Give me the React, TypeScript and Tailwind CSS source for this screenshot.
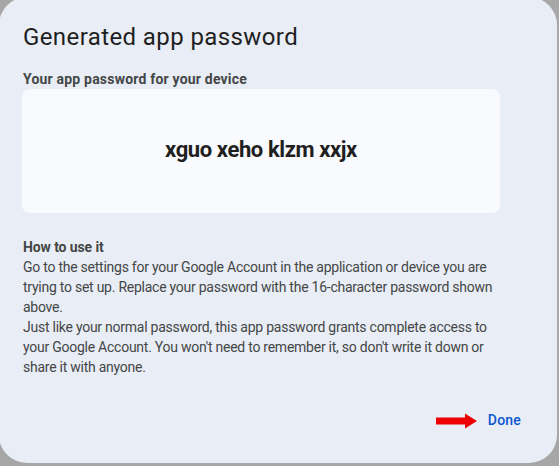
export default function App() {
  return (
    <div className="h-[466px] w-[559px] overflow-hidden bg-[#a7a7a7] font-['Roboto','Liberation_Sans',sans-serif]">
      <section className="ml-[-1px] mt-[-3px] flex h-[466px] w-[558px] flex-col rounded-[28px] bg-[#e9edf6] px-6 pt-6">
        <h1 className="text-[24px] leading-[32px] tracking-[0.4px] text-[#1f1f1f]">Generated app password</h1>

        <p className="mt-[17px] text-[14px] font-bold leading-[19px] tracking-[0.2px] text-[#444746]">
          Your app password for your device
        </p>

        <div className="-ml-px flex h-[124px] w-[478px] items-center justify-center rounded-[8px] bg-[#f8fafe] pb-[3px]">
          <span className="text-[22px] font-bold tracking-[-0.4px] text-[#1f1f1f]">xguo xeho klzm xxjx</span>
        </div>

        <div className="mt-6 w-[476px] text-[14px] leading-[20px] tracking-[-0.25px] text-[#444746]">
          <p className="font-bold tracking-[-0.1px]">How to use it</p>
          <p>
            Go to the settings for your Google Account in the application or device you are trying to set up. Replace
            your password with the 16-character password shown above.
          </p>
          <p>
            Just like your normal password, this app password grants complete access to your Google Account. You
            won't need to remember it, so don't write it down or share it with anyone.
          </p>
        </div>

        <div className="mt-auto mb-[32px] flex items-center justify-end gap-[10px] pr-[12px]">
          <svg width="42" height="16" viewBox="0 0 42 16" aria-hidden="true">
            <path d="M0 4.5 H29 V0.5 L41 8 L29 15.5 V11.5 H0 Z" fill="#ee0000" />
          </svg>
          <button className="text-[14px] font-medium tracking-[0.2px] text-[#0b57d0]" type="button">
            Done
          </button>
        </div>
      </section>
    </div>
  );
}
